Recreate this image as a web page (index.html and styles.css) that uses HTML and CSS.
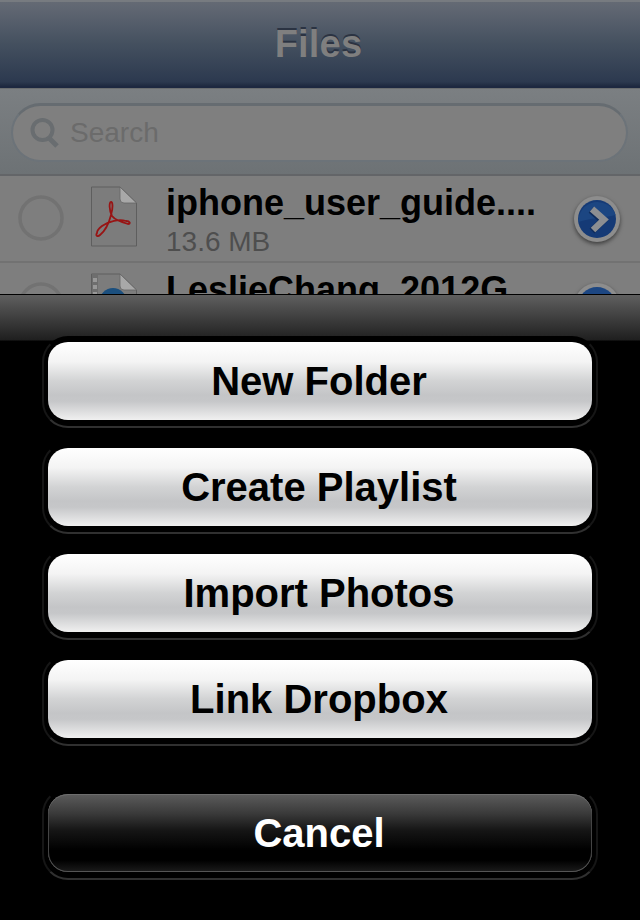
FILE: index.html
```html
<!DOCTYPE html>
<html lang="en">
<head>
<meta charset="utf-8">
<title>Files</title>
<link rel="stylesheet" href="styles.css">
</head>
<body>
<div class="screen">
  <div class="dimmed">
    <header class="navbar"><h1 class="nav-title">Files</h1></header>
    <div class="searchbar">
      <div class="searchfield">
        <svg class="search-icon" viewBox="0 0 30 32" aria-hidden="true"><circle cx="12.500" cy="13" r="10" fill="none" stroke="#696d70" stroke-width="4"/><path d="M19 21 L27 29" stroke="#696d70" stroke-width="5" fill="none"/></svg>
        <span class="search-text">Search</span>
      </div>
    </div>
    <div class="row">
      <svg class="radio" viewBox="0 0 46 46" aria-hidden="true"><circle cx="23" cy="23" r="21" fill="none" stroke="#727272" stroke-width="3.500"/></svg>
      <svg class="doc" viewBox="0 0 48 62" aria-hidden="true">
        <path d="M1.500 1 H30 L46.500 17 V60 H1.500 Z" fill="#7c7c7c" stroke="#5e5e5e"/>
        <path d="M30 1 L46.500 17 H34 Q30 17 30 13 Z" fill="#a8a8a8" stroke="#666" stroke-width=".8"/>
        <path d="M7 47 C5 50 8 51 10 49 C15 45 19 37 21 29 C23 22 23 16 21 16 C19 16 19 24 22 30 C25 34 31 36 38 38 C41 38 40 35 36 35 C29 33 19 35 12 40 C8 43 7 45 7 47 Z" fill="none" stroke="#981414" stroke-width="1.800"/>
      </svg>
      <div class="row-text">
        <div class="file-name">iphone_user_guide....</div>
        <div class="file-size">13.6 MB</div>
      </div>
      <svg class="disclosure" viewBox="0 0 50 50" aria-hidden="true">
        <circle cx="25" cy="25" r="23" fill="#8d8d8d"/>
        <circle cx="25" cy="25" r="19" fill="#153a76"/>
        <path d="M6.500 28 A19 19 0 0 1 43.500 21 C33 24 17 24 6.500 28 Z" fill="#1c4682"/>
        <path d="M20 15 L32 25.500 L21 36" fill="none" stroke="#0f2c5c" stroke-width="7" transform="translate(-1 1)"/>
        <path d="M20 15 L32 25.500 L21 36" fill="none" stroke="#8c8e92" stroke-width="6.500"/>
      </svg>
    </div>
    <div class="row">
      <svg class="radio" viewBox="0 0 46 46" aria-hidden="true"><circle cx="23" cy="23" r="21" fill="none" stroke="#727272" stroke-width="3.500"/></svg>
      <svg class="doc" viewBox="0 0 48 62" aria-hidden="true">
        <path d="M1.500 1 H30 L46.500 17 V60 H1.500 Z" fill="#7c7c7c" stroke="#5e5e5e"/>
        <path d="M30 1 L46.500 17 H34 Q30 17 30 13 Z" fill="#a8a8a8" stroke="#666" stroke-width=".8"/>
        <path d="M2 2 H8 V60 H2 Z" fill="#6e6e6e"/>
        <path d="M3 5 H7 V9 H3 Z M3 12 H7 V16 H3 Z M3 19 H7 V23 H3 Z" fill="#989898"/>
        <circle cx="23" cy="28.500" r="13.500" fill="#1b4f7e"/>
      </svg>
      <div class="row-text">
        <div class="file-name">LeslieChang_2012G</div>
        <div class="file-size">&nbsp;</div>
      </div>
      <svg class="disclosure" viewBox="0 0 50 50" aria-hidden="true">
        <circle cx="25" cy="25" r="23" fill="#8d8d8d"/>
        <circle cx="25" cy="25" r="19" fill="#1c4682"/>
      </svg>
    </div>
  </div>
  <div class="sheet">
    <div class="sheet-actions">
      <div class="btn-wrap"><button class="btn">New Folder</button></div>
      <div class="btn-wrap"><button class="btn">Create Playlist</button></div>
      <div class="btn-wrap"><button class="btn">Import Photos</button></div>
      <div class="btn-wrap"><button class="btn">Link Dropbox</button></div>
      <div class="btn-wrap cancel-wrap"><button class="btn btn-cancel">Cancel</button></div>
    </div>
  </div>
</div>
</body>
</html>
```
FILE: styles.css
```css
* { box-sizing: border-box; }
html, body { margin: 0; padding: 0; background: #000; }
body { font-family: "Liberation Sans", Arial, sans-serif; }
.screen { width: 640px; height: 920px; display: flex; flex-direction: column; overflow: hidden; }

.dimmed { height: 294px; overflow: hidden; flex: none; background: #7e7e7e; }
.navbar {
  height: 88px;
  display: flex; align-items: center; justify-content: center;
  padding-right: 3px;
  background: linear-gradient(#646a74 0, #5d6470 12%, #44505f 50%, #2c394f 95%, #1f2a40 100%);
  border-top: 2px solid #777b80;
  border-bottom: 2px solid #1d2840;
}
.nav-title {
  margin: 0; font-size: 38px; font-weight: 700; color: #7f7f7f; letter-spacing: .2px;
  text-shadow: 0 -2px 0 #2b3342;
}
.searchbar {
  height: 88px; padding: 14px 12px 0 11px;
  background: linear-gradient(#7b7f82, #6d7275);
  border-bottom: 2px solid #636568;
  border-top: 1px solid #6b6e70;
}
.searchfield {
  height: 59px; border-radius: 30px;
  background: #7f7f7f;
  border: 2px solid #6c7379;
  border-top: 3px solid #666c71;
  display: flex; align-items: center; padding-left: 17px; gap: 10px;
}
.search-icon { width: 30px; height: 32px; flex: none; }
.search-text { font-size: 28px; color: #6b6b6b; }

.row {
  height: 87px; flex: none;
  display: flex; align-items: flex-start;
  border-bottom: 2px solid #727272;
  position: relative;
}
.radio { width: 46px; height: 46px; flex: none; margin: 19px 0 0 18px; }
.doc { width: 48px; height: 62px; flex: none; margin: 10px 0 0 26px; }
.row-text { margin-left: 28px; width: 380px; flex: none; }
.file-name { font-size: 36px; font-weight: 700; color: #000; line-height: 42px; margin-top: 6px; white-space: nowrap; }
.file-size { font-size: 28px; color: #4e4e4e; line-height: 32px; margin-top: 2px; }
.disclosure {
  width: 50px; height: 50px;
  position: absolute; left: 572px; top: 18px;
  filter: drop-shadow(0 2px 2px #3c3c3c);
}

.sheet {
  flex: 1;
  background: linear-gradient(#5f5f5f 0, #1f1f1f 45px, #000 46px, #000 100%);
  border-top: 1px solid #000;
  padding-top: 47px;
}
.sheet-actions { display: flex; flex-direction: column; padding: 0 48px; gap: 28px; }
.btn-wrap { position: relative; border-radius: 22px; }
.btn-wrap::before {
  content: ""; position: absolute; inset: -6px -6px -8px;
  border-radius: 26px; background: #000;
  border: 2px solid transparent;
  border-left-color: #161616;
  border-right-color: #161616;
  border-bottom-color: #303030;
}
.btn {
  position: relative; display: block; width: 100%; height: 78px;
  border: 0; border-radius: 20px; padding: 0 2px 0 0;
  font: 700 40px "Liberation Sans", Arial, sans-serif; color: #000;
  background: linear-gradient(#fff 0, #f4f4f4 25%, #d2d3d4 50%, #c4c5c7 68%, #c6c7c9 76%, #f0f0f0 100%);
}
.cancel-wrap { margin-top: 28px; }
.btn-cancel {
  color: #fff;
  background: linear-gradient(#5c5c5c 0, #3a3a3a 25%, #161616 46%, #000 72%, #000 85%, #1c1c1c 100%);
  box-shadow: inset 0 1px 0 #6d6d6d, inset 0 -1px 0 #555, inset 1px 0 0 #444, inset -1px 0 0 #444;
}
```
